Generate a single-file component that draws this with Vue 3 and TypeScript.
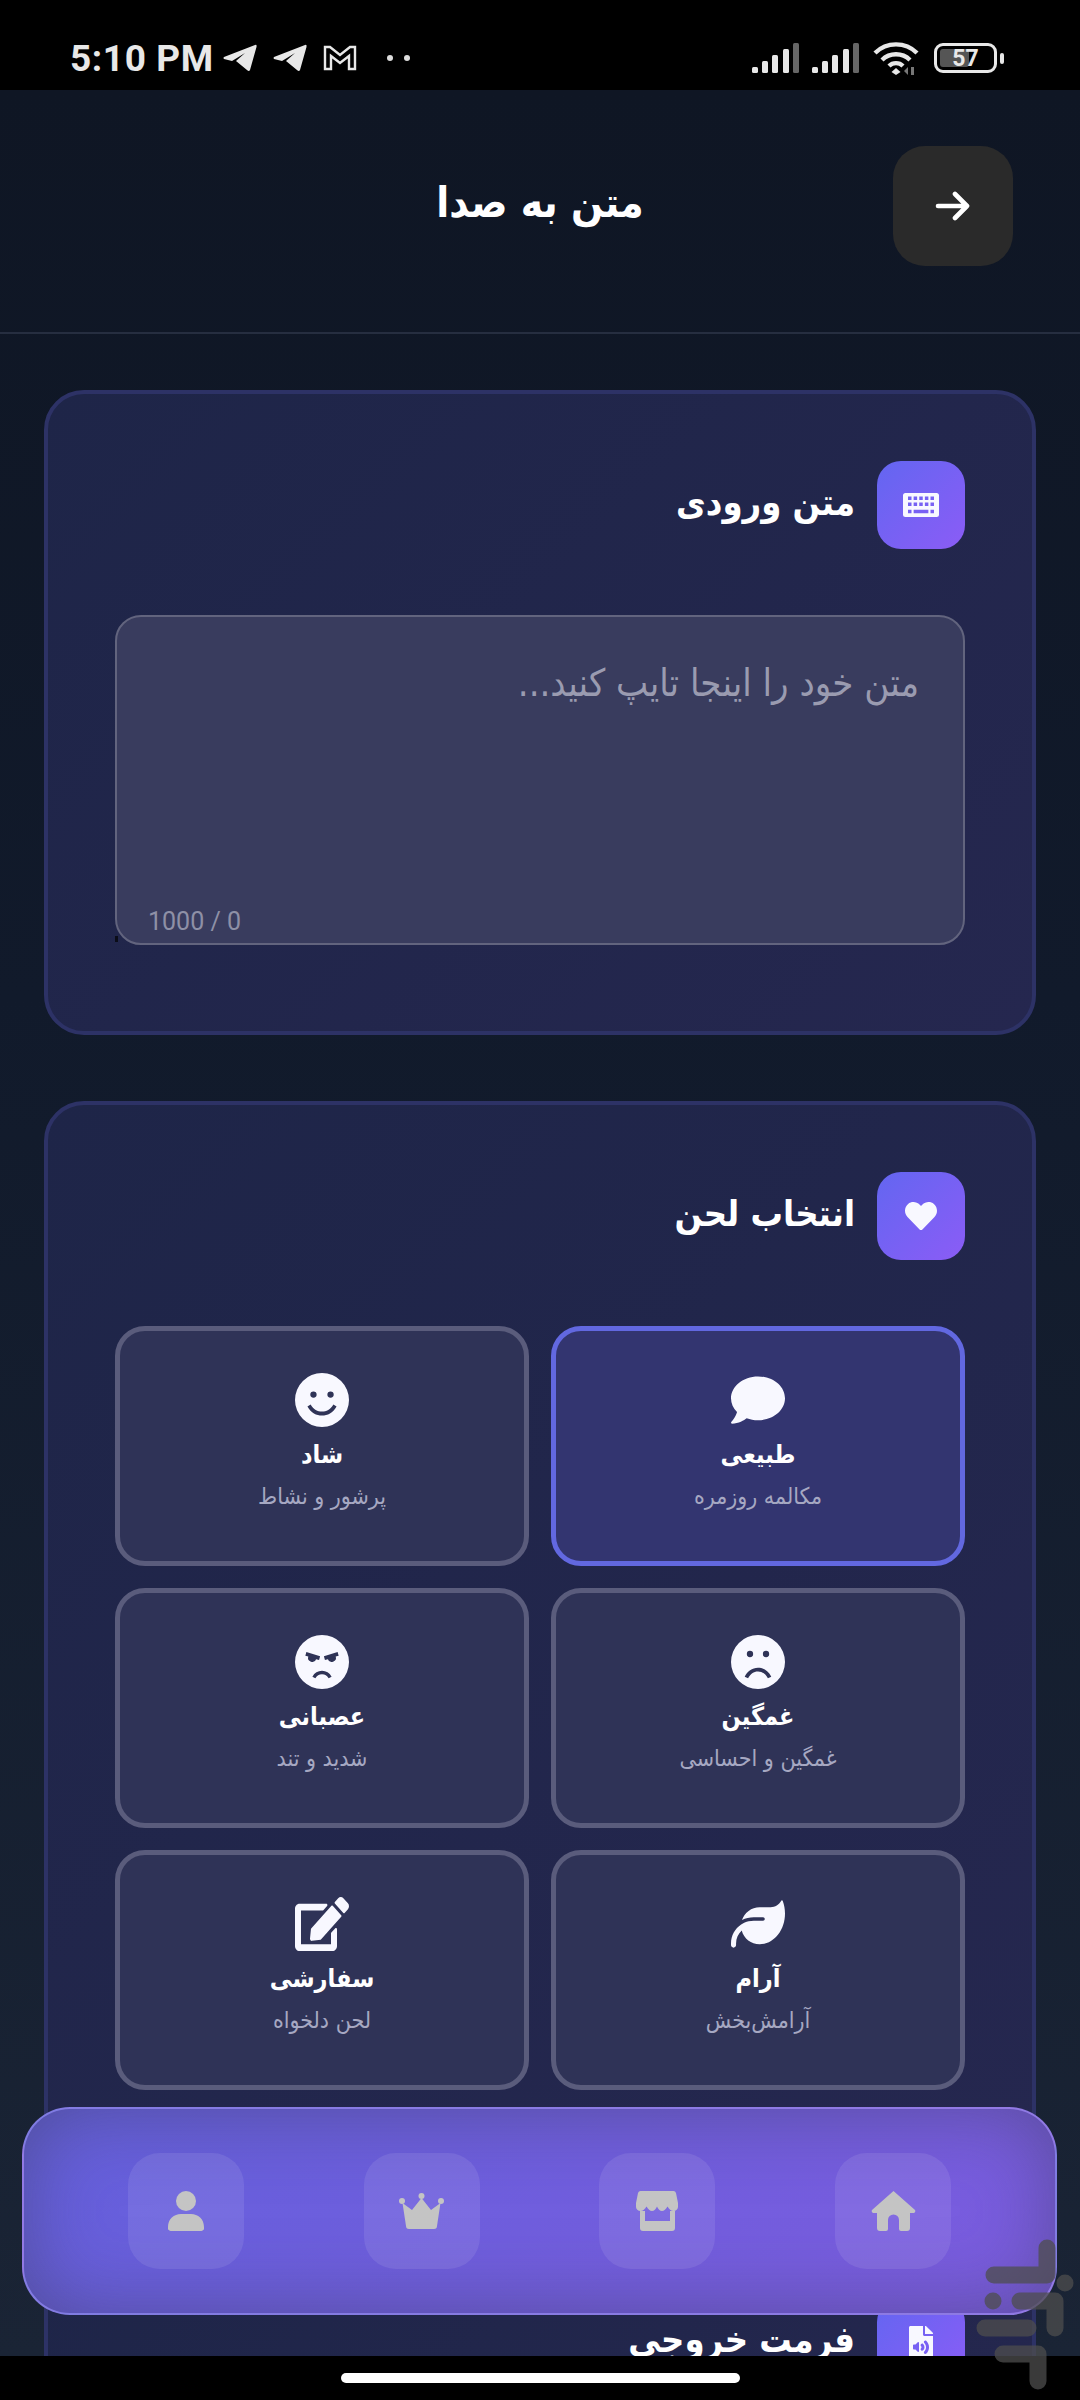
<script setup lang="ts">
interface Tone {
  id: string
  title: string
  sub: string
  icon: string
  box: string
}

const face = 'M256 0a256 256 0 1 0 0 512a256 256 0 1 0 0-512z'

const icons = {
  chat: 'M256 32C114.6 32 0 125.1 0 240c0 49.6 21.4 95 57 130.7C44.5 421.1 2.7 466 2.2 466.5c-2.2 2.3-2.8 5.7-1.5 8.7S4.8 480 8 480c66.3 0 116-31.8 140.6-51.4 32.7 12.3 69 19.4 107.4 19.4 141.4 0 256-93.1 256-208S397.4 32 256 32z',
  smile: face + 'M175 175a30 30 0 1 0 0 60a30 30 0 1 0 0-60zM337 175a30 30 0 1 0 0 60a30 30 0 1 0 0-60zM118 318c35 62 85 86 138 86s103-24 138-86l-30-20c-28 46-66 68-108 68s-80-22-108-68z',
  sad: face + 'M180 150a30 30 0 1 0 0 60a30 30 0 1 0 0-60zM332 150a30 30 0 1 0 0 60a30 30 0 1 0 0-60zM130 395c25-50 70-85 126-85s101 35 126 85l-32 16c-22-40-52-65-94-65s-72 25-94 65z',
  angry: face + 'M108 160l130 42-10 36-28-9a38 38 0 0 1-74-24l-28-9zM404 160l-130 42 10 36 28-9a38 38 0 0 0 74-24l28-9zM165 395c20-35 52-55 91-55s71 20 91 55l-28 16c-15-25-35-39-63-39s-48 14-63 39z',
  leaf: 'M272 96c-78.6 0-145.1 51.5-167.7 122.5c33.6-17 71.5-26.5 111.7-26.5h88c8.8 0 16 7.2 16 16s-7.2 16-16 16H288 216s0 0 0 0c-16.6 0-32.7 1.9-48.3 5.4c-25.9 5.9-49.9 16.4-71.4 30.7c0 0 0 0 0 0C38.3 298.8 0 364.9 0 440v16c0 13.3 10.7 24 24 24s24-10.7 24-24V440c0-48.7 20.7-92.5 53.8-123.2C121.6 392.3 190.3 448 272 448l1 0c132.1-.7 239-130.9 239-291.4c0-42.6-7.5-83.1-21.1-119.6c-2.6-6.9-12.7-6.6-16.2 0C455.9 72.1 418.7 96 376 96L272 96z',
  edit: 'M402.6 83.2l90.2 90.2c3.8 3.8 3.8 10 0 13.8L274.4 405.6l-92.8 10.3c-12.4 1.4-22.9-9.1-21.5-21.5l10.3-92.8L388.8 83.2c3.8-3.8 10-3.8 13.8 0zm162-22.9l-48.8-48.8c-15.2-15.2-39.9-15.2-55.2 0l-35.4 35.4c-3.8 3.8-3.8 10 0 13.8l90.2 90.2c3.8 3.8 10 3.8 13.8 0l35.4-35.4c15.2-15.3 15.2-40 0-55.2zM384 346.2V448H64V128h229.8c3.2 0 6.2-1.3 8.5-3.5l40-40c7.6-7.6 2.2-20.5-8.5-20.5H48C21.5 64 0 85.5 0 112v352c0 26.5 21.5 48 48 48h352c26.5 0 48-21.5 48-48V306.2c0-10.7-12.9-16-20.5-8.5l-40 40c-2.2 2.3-3.5 5.3-3.5 8.5z',
}

const keyboard = 'M40 64h496a40 40 0 0 1 40 40v304a40 40 0 0 1-40 40H40a40 40 0 0 1-40-40V104a40 40 0 0 1 40-40z'
  + [80, 170, 260, 350, 440].map(x => `M${x} 120h56v56h-56zM${x} 215h56v56h-56z`).join('')
  + 'M80 330h56v56h-56zM170 330h236v56h-236zM440 330h56v56h-56z'

const heart = 'M462.3 62.6C407.5 15.9 326 24.3 275.7 76.2L256 96.5l-19.7-20.3C186.1 24.3 104.5 15.9 49.7 62.6c-62.8 53.6-66.1 149.8-9.9 207.9l193.5 199.8c12.5 12.9 32.8 12.9 45.3 0l193.5-199.8c56.3-58.1 53-154.3-9.8-207.9z'

const file_audio = 'M224 136V0H24C10.7 0 0 10.7 0 24v464c0 13.3 10.7 24 24 24h336c13.3 0 24-10.7 24-24V160H248c-13.2 0-24-10.8-24-24zm-64 268c0 10.7-12.9 16-20.5 8.5L104 376H76c-6.6 0-12-5.4-12-12v-56c0-6.6 5.4-12 12-12h28l35.5-36.5c7.6-7.6 20.5-2.2 20.5 8.5v136zm33.2-47.6c9.1-9.3 9.1-24.1 0-33.4-22.1-22.8 12.2-56.2 34.4-33.5 27.2 27.9 27.2 72.4 0 100.4-21.8 22.3-56.9-10.4-34.4-33.5zm86-117.1c54.4 55.9 54.4 144.8 0 200.8-21.8 22.4-57-10.3-34.4-33.5 36.2-37.2 36.3-96.5 0-133.8-22.1-22.8 12.3-56.3 34.4-33.5zM384 121.9v6.1H256V0h6.1c6.4 0 12.5 2.5 17 7l97.9 98c4.5 4.5 7 10.6 7 16.9z'

const tones: Tone[] = [
  { id: 'natural', title: 'طبیعی', sub: 'مکالمه روزمره', icon: icons.chat, box: '0 0 512 512' },
  { id: 'happy', title: 'شاد', sub: 'پرشور و نشاط', icon: icons.smile, box: '0 0 512 512' },
  { id: 'sad', title: 'غمگین', sub: 'غمگین و احساسی', icon: icons.sad, box: '0 0 512 512' },
  { id: 'angry', title: 'عصبانی', sub: 'شدید و تند', icon: icons.angry, box: '0 0 512 512' },
  { id: 'calm', title: 'آرام', sub: 'آرامش‌بخش', icon: icons.leaf, box: '0 0 512 512' },
  { id: 'custom', title: 'سفارشی', sub: 'لحن دلخواه', icon: icons.edit, box: '0 0 576 512' },
]

const signal_bars = [
  { x: 0, y: 24, h: 6 },
  { x: 10, y: 18, h: 12 },
  { x: 20, y: 12, h: 18 },
  { x: 31, y: 6, h: 24 },
]
</script>

<template>
  <div class="phone" dir="rtl">
    <div class="status" dir="ltr">
      <div class="status-left">
        <span class="clock">5:10 PM</span>
        <svg v-for="n in 2" :key="n" class="tg" viewBox="0 0 34 28">
          <path d="M1 13 L32 1 Q34 0 33.5 3 L27 26 Q26 28 24 26 L13 17 L22 9 L9 17 L1 15 Q0 14 1 13z" />
        </svg>
        <svg class="gm" viewBox="0 0 34 26">
          <path d="M2 2h5l10 8 10-8h5v22h-6V11l-9 7-9-7v13H2z" />
        </svg>
        <span class="dots"><i /><i /></span>
      </div>
      <div class="status-right">
        <svg v-for="n in 2" :key="n" class="sig" viewBox="0 0 48 30">
          <rect v-for="b in signal_bars" :key="b.x" :x="b.x" :y="b.y" width="6" :height="b.h" rx="1.5" fill="#e8e8e8" />
          <rect x="41" y="0" width="6" height="30" rx="1.5" fill="#666" />
        </svg>
        <svg class="wifi" viewBox="0 0 46 34">
          <path d="M2 12a30 30 0 0 1 42 0M9 19a20 20 0 0 1 28 0M16 25a10 10 0 0 1 14 0" fill="none" stroke="#e8e8e8" stroke-width="4.4" />
          <path d="M23 27l4.5 4-4.5 3-4.5-3z" fill="#e8e8e8" />
          <path d="M35 34v-8l-4 4zM38 34v-8h3v8z" fill="#777" />
        </svg>
        <div class="battery">
          <div class="battery-body">
            <div class="battery-fill" />
            <span>57</span>
          </div>
          <div class="battery-nub" />
        </div>
      </div>
    </div>

    <div class="page">
      <header class="top">
        <button class="back">
          <svg viewBox="0 0 36 30" width="36" height="30">
            <path d="M3 15h29M20 3l12 12-12 12" fill="none" stroke="#fff" stroke-width="4.6" stroke-linecap="round" stroke-linejoin="round" />
          </svg>
        </button>
        <h1>متن به صدا</h1>
      </header>

      <main class="content">
        <section class="card">
          <div class="card-head">
            <div class="head-icon">
              <svg viewBox="0 0 576 512" width="36" height="32"><path :d="keyboard" fill-rule="evenodd" /></svg>
            </div>
            <h2>متن ورودی</h2>
          </div>
          <div class="input-wrap">
            <textarea placeholder="متن خود را اینجا تایپ کنید..." />
            <span class="counter" dir="ltr">1000 / 0</span>
            <i class="grip" />
          </div>
        </section>

        <section class="card">
          <div class="card-head">
            <div class="head-icon">
              <svg viewBox="0 0 512 512" width="32" height="32"><path :d="heart" /></svg>
            </div>
            <h2>انتخاب لحن</h2>
          </div>
          <div class="tones">
            <div v-for="(t, i) in tones" :key="t.id" class="tone" :class="{ active: i === 0 }">
              <svg :viewBox="t.box" class="tone-icon" preserveAspectRatio="none"><path :d="t.icon" fill-rule="evenodd" /></svg>
              <strong>{{ t.title }}</strong>
              <small>{{ t.sub }}</small>
            </div>
          </div>
        </section>

        <section class="card">
          <div class="card-head">
            <div class="head-icon">
              <svg viewBox="0 0 384 512" width="24" height="32"><path :d="file_audio" /></svg>
            </div>
            <h2>فرمت خروجی</h2>
          </div>
        </section>
      </main>
    </div>

    <div class="home-bar"><div class="home-pill" /></div>

    <nav class="nav">
      <button class="nav-btn">
        <svg viewBox="0 0 45 40" width="45" height="40">
          <path d="M22.5 0 L44 19 a2 2 0 0 1-1.5 3H39v15a3 3 0 0 1-3 3h-6a2 2 0 0 1-2-2v-9a5.5 5.5 0 0 0-11 0v9a2 2 0 0 1-2 2H9a3 3 0 0 1-3-3V22H2.5A2 2 0 0 1 1 19z" />
        </svg>
      </button>
      <button class="nav-btn">
        <svg viewBox="0 0 42 40" width="42" height="40">
          <path d="M5 0h32a3 3 0 0 1 3 2l2 10v4c0 2-2 4-4.5 4S33 18 31.5 15.5C30 18 28 20 26 20s-4-2-5-4.5C20 18 18 20 16 20s-4-2-5.5-4.5C9 18 7 20 4.5 20S0 18 0 16v-4L2 2a3 3 0 0 1 3-2z" />
          <path d="M4 20h5v10h25V20h5v17a3 3 0 0 1-3 3H7a3 3 0 0 1-3-3z" />
        </svg>
      </button>
      <button class="nav-btn">
        <svg viewBox="0 0 45 36" width="45" height="36">
          <circle cx="3" cy="8" r="3" /><circle cx="22.5" cy="3" r="3" /><circle cx="42" cy="8" r="3" />
          <path d="M3.5 10 L13 17 L22.5 5 L32 17 L41.5 10 L38 33 a3 3 0 0 1-3 3H10 a3 3 0 0 1-3-3z" />
        </svg>
      </button>
      <button class="nav-btn">
        <svg viewBox="0 0 36 40" width="36" height="40">
          <circle cx="18" cy="10" r="10" />
          <path d="M0 36c0-8 6-13 13-13h10c7 0 13 5 13 13a3 3 0 0 1-3 4H3a3 3 0 0 1-3-4z" />
        </svg>
      </button>
    </nav>

    <svg class="mark" viewBox="0 0 100 160">
      <path d="M71 13v27H18M89 48v0M17 66v0M44 66h35v27M9 93h43M27 119h35v27" />
    </svg>
  </div>
</template>

<style scoped>
.phone {
  position: relative;
  display: flex;
  flex-direction: column;
  width: 1080px;
  height: 2400px;
  overflow: hidden;
  background: #000;
  font-family: "DejaVu Sans Condensed", "DejaVu Sans", sans-serif;
  color: #fff;
}

.status {
  flex: 0 0 90px;
  display: flex;
  justify-content: space-between;
  align-items: center;
  padding: 26px 76px 0 70px;
  box-sizing: border-box;
  background: #000;
}

.status-left,
.status-right {
  display: flex;
  align-items: center;
}

.clock {
  margin-right: 9px;
  font-family: Roboto, sans-serif;
  font-size: 37px;
  font-weight: 700;
  letter-spacing: 0.6px;
  color: #e8e8e8;
}

.tg {
  width: 34px;
  height: 28px;
  margin-right: 16px;
  fill: #e8e8e8;
}

.gm {
  width: 34px;
  height: 26px;
  fill: none;
  stroke: #e8e8e8;
  stroke-width: 2.4;
}

.dots {
  display: flex;
  gap: 11px;
  margin-left: 30px;
}

.dots i {
  width: 6px;
  height: 6px;
  border-radius: 50%;
  background: #ddd;
}

.sig {
  width: 48px;
  height: 30px;
  margin-right: 12px;
}

.wifi {
  width: 46px;
  height: 34px;
  margin-left: 1px;
}

.battery {
  display: flex;
  align-items: center;
  gap: 3px;
  margin-left: 15px;
}

.battery-body {
  position: relative;
  display: flex;
  justify-content: center;
  align-items: center;
  width: 63px;
  height: 30px;
  border: 3px solid #e8e8e8;
  border-radius: 9px;
  box-sizing: border-box;
}

.battery-fill {
  position: absolute;
  top: 3px;
  bottom: 3px;
  left: 3px;
  width: 29px;
  border-radius: 3px;
  background: #555;
}

.battery-body span {
  position: relative;
  font-family: Roboto, sans-serif;
  font-size: 23px;
  font-weight: 700;
  color: #e8e8e8;
}

.battery-nub {
  width: 4px;
  height: 11px;
  border-radius: 2px;
  background: #e8e8e8;
}

.page {
  flex: 1;
  min-height: 0;
  display: flex;
  flex-direction: column;
  background: linear-gradient(180deg, #0f1624 0%, #111a2b 40%, #1a2435 100%);
}

.top {
  position: relative;
  flex: 0 0 244px;
  display: flex;
  align-items: center;
  padding: 0 67px 10px;
  box-sizing: border-box;
  border-bottom: 2px solid #262e40;
}

.back {
  display: flex;
  justify-content: center;
  align-items: center;
  width: 120px;
  height: 120px;
  padding: 0;
  border: 0;
  border-radius: 32px;
  background: #2a2a2a;
}

h1 {
  flex: 1;
  margin: 0 0 6px 120px;
  text-align: center;
  font-size: 42px;
  font-weight: 700;
  line-height: 1.2;
}

.content {
  flex: 1;
  min-height: 0;
  overflow: hidden;
  display: flex;
  flex-direction: column;
  gap: 66px;
  padding: 56px 44px 0;
}

.card {
  flex: none;
  padding: 67px;
  border: 4px solid #2d3266;
  border-radius: 40px;
  background: linear-gradient(135deg, #1e2548, #25274f);
}

.card-head {
  display: flex;
  align-items: center;
  gap: 22px;
  margin-bottom: 66px;
}

.head-icon {
  flex: none;
  display: flex;
  justify-content: center;
  align-items: center;
  width: 88px;
  height: 88px;
  border-radius: 24px;
  background: linear-gradient(135deg, #6366f1, #8b5cf6);
}

.head-icon svg {
  fill: #f8f8ff;
}

h2 {
  margin: 0 0 4px;
  font-size: 36px;
  font-weight: 700;
  line-height: 1.2;
}

.input-wrap {
  position: relative;
  height: 330px;
  margin-bottom: 19px;
}

textarea {
  display: block;
  width: 100%;
  height: 100%;
  padding: 44px 44px;
  box-sizing: border-box;
  resize: none;
  border: 2px solid #62647e;
  border-radius: 26px;
  background: #393c5e;
  font: 38px "DejaVu Sans Condensed", "DejaVu Sans", sans-serif;
  color: #fff;
  outline: none;
}

textarea::placeholder {
  color: #9a9bb0;
  opacity: 1;
}

.counter {
  position: absolute;
  left: 33px;
  bottom: 9px;
  font-family: Roboto, sans-serif;
  font-size: 25px;
  color: #8e90a6;
}

.grip {
  position: absolute;
  left: 0;
  bottom: 3px;
  width: 3px;
  height: 6px;
  background: #0b0d18;
}

.tones {
  display: grid;
  grid-template-columns: 1fr 1fr;
  gap: 22px;
}

.tone {
  display: flex;
  flex-direction: column;
  align-items: center;
  height: 240px;
  padding-top: 42px;
  box-sizing: border-box;
  border: 5px solid #5a5c7c;
  border-radius: 30px;
  background: #2f3357;
}

.tone.active {
  border-color: #6268e0;
  background: #333570;
}

.tone-icon {
  width: 54px;
  height: 54px;
  fill: #f8f8ff;
}

.tone strong {
  margin-top: 10px;
  font-size: 25px;
  font-weight: 700;
  line-height: 36px;
}

.tone small {
  margin-top: 6px;
  font-size: 23px;
  line-height: 34px;
  color: #a6a8c2;
}

.home-bar {
  flex: 0 0 44px;
  display: flex;
  justify-content: center;
  padding-top: 17px;
  box-sizing: border-box;
  background: #000;
}

.home-pill {
  width: 399px;
  height: 10px;
  border-radius: 5px;
  background: #fff;
}

.nav {
  position: absolute;
  left: 22px;
  right: 23px;
  top: 2107px;
  height: 208px;
  display: flex;
  justify-content: space-between;
  align-items: center;
  padding: 0 104px;
  box-sizing: border-box;
  border: 2px solid rgba(255, 255, 255, 0.18);
  border-radius: 48px;
  background: linear-gradient(135deg, #6460dc, #7c5cdf);
  box-shadow: inset 0 0 80px rgba(60, 60, 90, 0.5);
}

.nav-btn {
  display: flex;
  justify-content: center;
  align-items: center;
  width: 116px;
  height: 116px;
  padding: 0;
  border: 0;
  border-radius: 32px;
  background: rgba(255, 255, 255, 0.09);
}

.nav-btn svg {
  fill: #c4c4c4;
}

.mark {
  position: absolute;
  left: 976px;
  top: 2235px;
  width: 100px;
  height: 160px;
  fill: none;
  stroke: rgba(77, 77, 77, 0.75);
  stroke-width: 17;
  stroke-linecap: round;
  stroke-linejoin: round;
}
</style>
